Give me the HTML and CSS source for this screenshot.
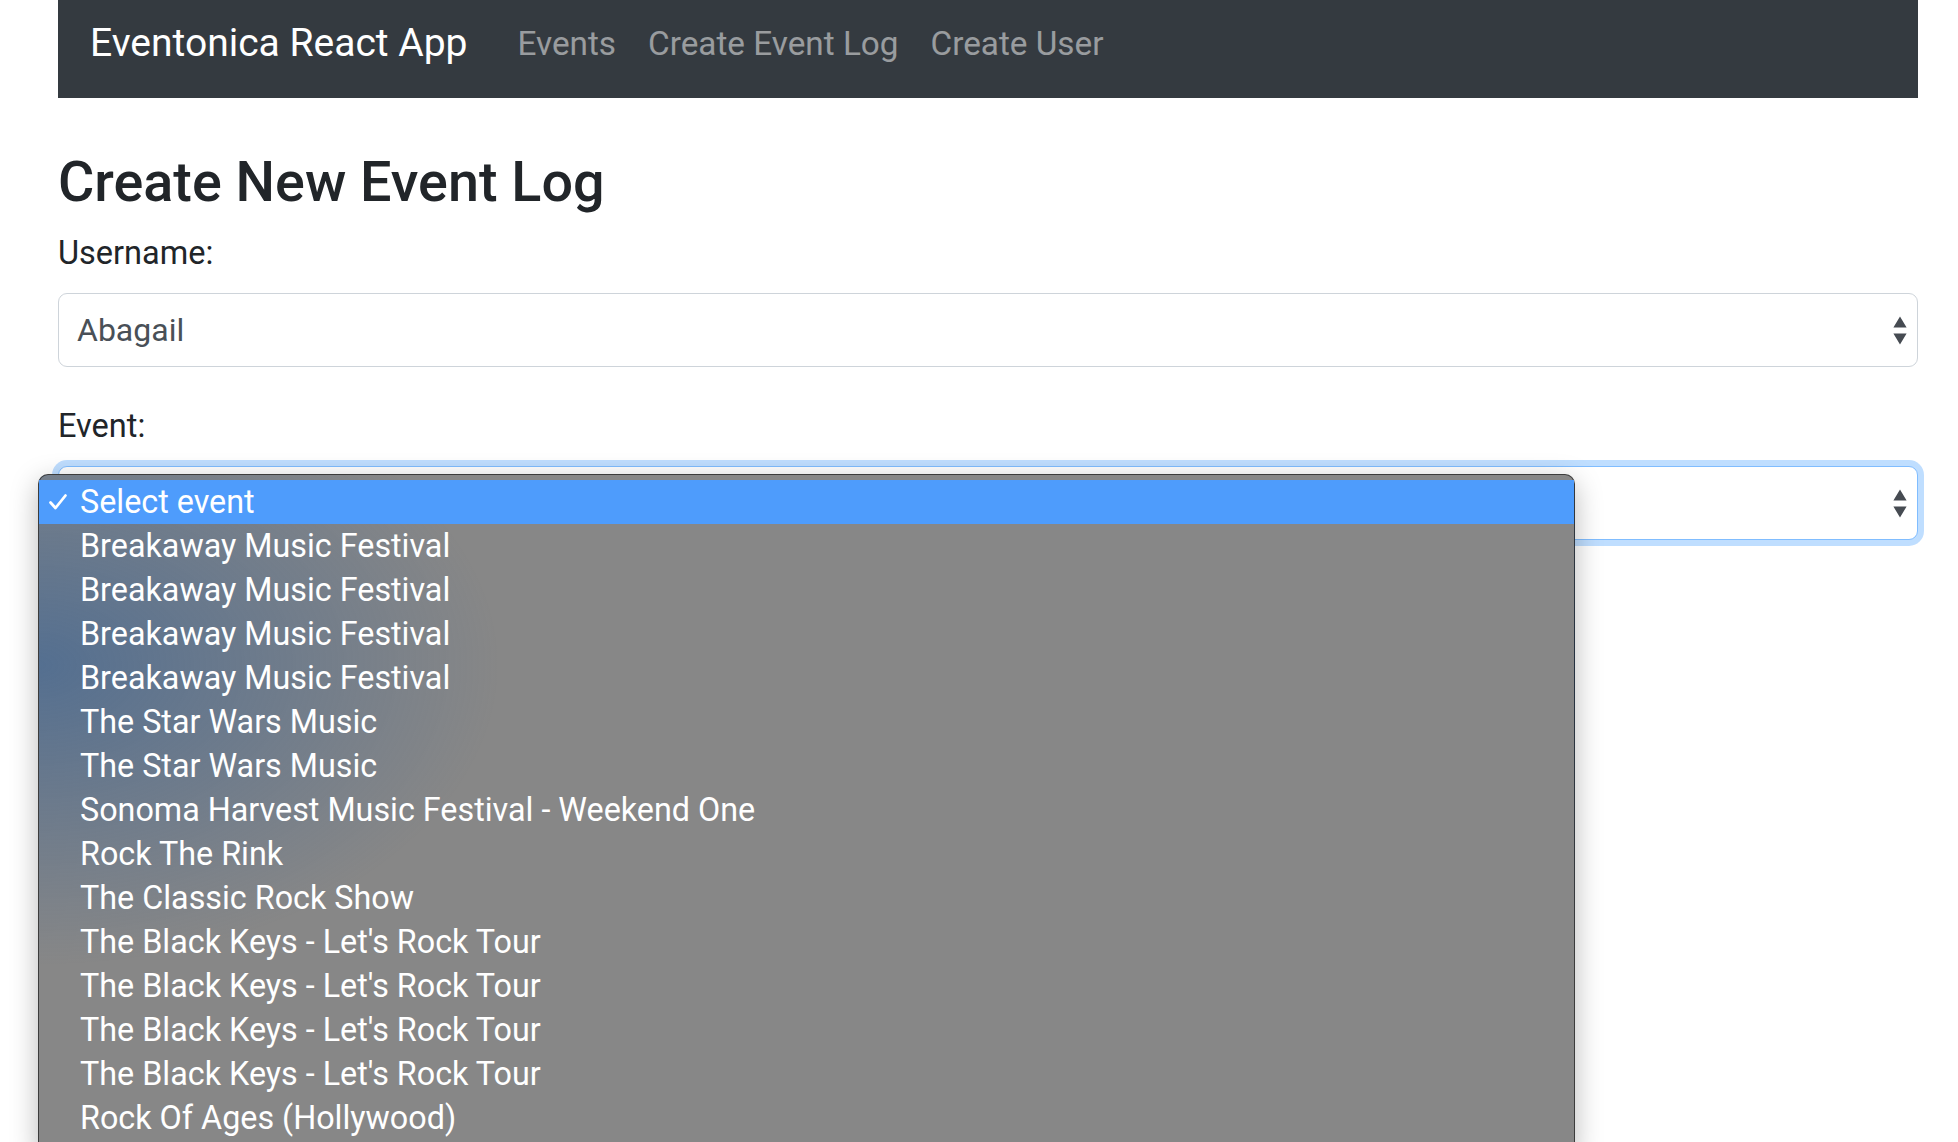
FILE: index.html
```html
<!DOCTYPE html>
<html lang="en">
<head>
<meta charset="utf-8">
<title>Eventonica React App</title>
<link rel="stylesheet" href="styles.css">
</head>
<body>
<div class="page">
  <nav class="navbar">
    <a class="brand" href="#">Eventonica React App</a>
    <ul class="nav">
      <li><a href="#">Events</a></li>
      <li><a href="#">Create Event Log</a></li>
      <li><a href="#">Create User</a></li>
    </ul>
  </nav>
  <main class="content">
    <h3 class="title">Create New Event Log</h3>
    <div class="form-group">
      <label class="label">Username:</label>
      <div class="select">
        <span class="select-value">Abagail</span>
        <svg class="arrows" width="14" height="29" viewBox="0 0 14 29"><path d="M7 0.5 L13.6 11.5 L0.4 11.5 Z M0.4 17.5 L13.6 17.5 L7 28.5 Z" fill="#464b52"/></svg>
      </div>
    </div>
    <div class="form-group popup-anchor">
      <label class="label">Event:</label>
      <div class="select focused">
        <span class="select-value"></span>
        <svg class="arrows" width="14" height="29" viewBox="0 0 14 29"><path d="M7 0.5 L13.6 11.5 L0.4 11.5 Z M0.4 17.5 L13.6 17.5 L7 28.5 Z" fill="#464b52"/></svg>
      </div>
      <div class="popup">
        <div class="option selected">
          <svg class="check" width="20" height="18" viewBox="0 0 20 18"><path d="M2.5 9.5 L7.5 15 L17.5 2.5" fill="none" stroke="#fff" stroke-width="2.8" stroke-linecap="round" stroke-linejoin="round"/></svg>
          Select event
        </div>
        <div class="option">Breakaway Music Festival</div>
        <div class="option">Breakaway Music Festival</div>
        <div class="option">Breakaway Music Festival</div>
        <div class="option">Breakaway Music Festival</div>
        <div class="option">The Star Wars Music</div>
        <div class="option">The Star Wars Music</div>
        <div class="option">Sonoma Harvest Music Festival - Weekend One</div>
        <div class="option">Rock The Rink</div>
        <div class="option">The Classic Rock Show</div>
        <div class="option">The Black Keys - Let's Rock Tour</div>
        <div class="option">The Black Keys - Let's Rock Tour</div>
        <div class="option">The Black Keys - Let's Rock Tour</div>
        <div class="option">The Black Keys - Let's Rock Tour</div>
        <div class="option">Rock Of Ages (Hollywood)</div>
      </div>
    </div>
  </main>
</div>
</body>
</html>
```

FILE: styles.css
```css
html, body {
  margin: 0;
  padding: 0;
  height: 1142px;
  overflow: hidden;
  background: #ffffff;
}

body {
  font-family: Roboto, "Liberation Sans", Arial, sans-serif;
  font-size: 32px;
  line-height: 1.5;
  color: #212529;
}

.page {
  margin-left: 58px;
  width: 1860px;
}

.navbar {
  height: 98px;
  box-sizing: border-box;
  padding: 0 32px;
  background: #343a40;
  display: flex;
  align-items: center;
}

.brand {
  font-size: 39px;
  line-height: 60px;
  color: #ffffff;
  text-decoration: none;
  margin-right: 34px;
  margin-top: -12px;
}

.nav {
  list-style: none;
  margin: 0;
  padding: 0;
  display: flex;
  margin-top: -11px;
}

.nav a {
  display: block;
  padding: 0 16px;
  color: rgba(255, 255, 255, 0.5);
  text-decoration: none;
  font-size: 33.3px;
  line-height: 48px;
}

.content {
  padding-top: 48px;
}

.title {
  margin: 3px 0 13px 0;
  font-size: 55.7px;
  font-weight: 500;
  line-height: 67px;
  color: #212529;
}

.form-group {
  margin-bottom: 35px;
}

.label {
  display: block;
  margin-bottom: 16px;
  line-height: 48px;
  font-size: 32.5px;
}

.select {
  height: 74px;
  box-sizing: border-box;
  border: 1px solid #ced4da;
  border-radius: 9px;
  padding: 0 10px 0 18px;
  display: flex;
  align-items: center;
  justify-content: space-between;
  color: #495057;
  background: #ffffff;
}

.select.focused {
  border-color: #80bdff;
  box-shadow: 0 0 0 6px rgba(0, 123, 255, 0.25);
}

.popup-anchor {
  position: relative;
}

.popup {
  position: absolute;
  top: 72px;
  left: -20px;
  width: 1537px;
  box-sizing: border-box;
  padding-top: 5px;
  padding-bottom: 12px;
  border: 1px solid rgba(0, 0, 0, 0.55);
  border-bottom: none;
  border-radius: 10px 10px 0 0;
  background:
    radial-gradient(ellipse 460px 300px at 0px 190px, rgba(50, 95, 150, 0.6), rgba(50, 95, 150, 0) 100%),
    #878787;
  box-shadow: 0 8px 28px rgba(0, 0, 0, 0.28);
  color: #ffffff;
}

.option {
  position: relative;
  height: 44px;
  line-height: 44px;
  padding-left: 41px;
  font-size: 32.3px;
  white-space: nowrap;
}

.option.selected {
  background: #4e9cfc;
}

.check {
  position: absolute;
  left: 9px;
  top: 13px;
}
```
